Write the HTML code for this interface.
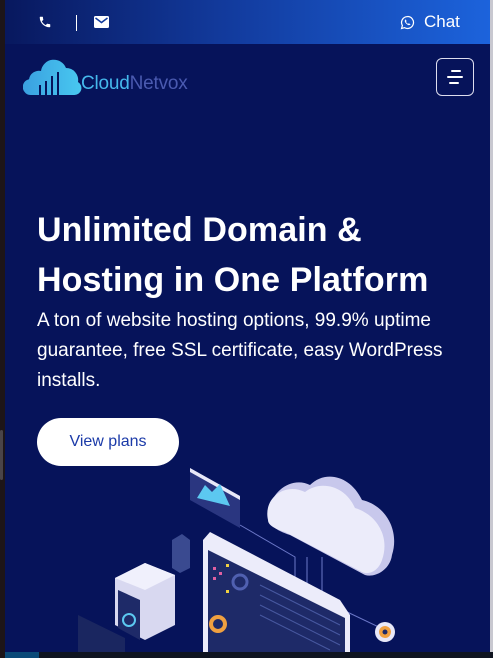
<!DOCTYPE html>
<html><head><meta charset="utf-8"><style>
*{margin:0;padding:0;box-sizing:border-box}
body{width:493px;height:658px;overflow:hidden;background:#06135a;font-family:"Liberation Sans",sans-serif;position:relative}
.lstrip{position:absolute;left:0;top:0;width:5px;height:658px;background:#1d1518}
.rstrip{position:absolute;right:0;top:0;width:3px;height:658px;background:#c8c8d0}
.top{position:absolute;left:5px;top:0;width:485px;height:44px;background:linear-gradient(90deg,#08185e,#123a9c 45%,#1c63dc)}
.bottom{position:absolute;left:5px;top:652px;width:488px;height:6px;background:#0f1420}
.bottom i{position:absolute;left:0;top:0;width:34px;height:6px;background:#0b4a78}
h1{position:absolute;left:37px;top:205px;color:#fff;font-size:34px;line-height:50px;font-weight:bold;width:450px;letter-spacing:0.1px}
p{position:absolute;left:37px;top:306px;color:#fff;font-size:19px;line-height:30px;width:440px}
.btn{position:absolute;left:37px;top:418px;width:142px;height:48px;border-radius:24px;background:#fff;color:#1b3aa8;font-size:16px;text-align:center;line-height:48px}
.menu{position:absolute;left:436px;top:58px;width:38px;height:38px;border:1.5px solid #dde;border-radius:6px}
.menu b{position:absolute;height:2px;background:#fff;border-radius:1px}
</style></head><body>
<div class="top">
<svg style="position:absolute;left:33px;top:15px" width="14" height="14" viewBox="0 0 24 24"><path fill="#fff" d="M6.6 10.8a15 15 0 006.6 6.6l2.2-2.2c.3-.3.7-.4 1-.2 1.1.4 2.3.6 3.6.6.6 0 1 .4 1 1V20c0 .6-.4 1-1 1A17 17 0 013 4c0-.6.4-1 1-1h3.5c.6 0 1 .4 1 1 0 1.3.2 2.5.6 3.6.1.3 0 .7-.2 1z"/></svg>
<div style="position:absolute;left:71px;top:15px;width:1px;height:16px;background:#fff"></div>
<svg style="position:absolute;left:89px;top:16px" width="15" height="12" viewBox="0 0 15 12"><rect width="15" height="12" rx="1.5" fill="#fff"/><path d="M1.5 2l6 4.5 6-4.5" stroke="#123a9c" stroke-width="1.5" fill="none"/></svg>
<svg style="position:absolute;left:395px;top:15px" width="15" height="15" viewBox="0 0 24 24"><path fill="none" stroke="#fff" stroke-width="2" d="M12 2.5a9.5 9.5 0 00-8.2 14.3L2.5 21.5l4.8-1.3A9.5 9.5 0 1012 2.5z"/><path fill="#fff" d="M8.5 7.5c.3-.3.8-.3 1 .1l.9 2c.1.3 0 .6-.2.8l-.5.6c.7 1.4 1.8 2.5 3.2 3.2l.6-.6c.2-.2.5-.3.8-.2l2 .9c.4.2.4.7.1 1-1 1.2-2.5 1.2-4.2.2a10 10 0 01-4-4c-.9-1.7-.8-3.1.3-4z"/></svg>
<div style="position:absolute;left:419px;top:12px;color:#fff;font-size:17px">Chat</div>
</div>
<svg style="position:absolute;left:23px;top:58px" width="60" height="38" viewBox="0 0 60 38"><defs><linearGradient id="g" x1="0" x2="1"><stop offset="0" stop-color="#3aa0e0"/><stop offset="1" stop-color="#48c8f0"/></linearGradient></defs><path fill="url(#g)" d="M8 37a8 8 0 01-2-15.8A10 10 0 0118 13 13 13 0 0143 10a12 12 0 0112 14 7 7 0 01-4 13z"/><g fill="#06135a"><rect x="16" y="27" width="2" height="10"/><rect x="22" y="23" width="2" height="14"/><rect x="28" y="18" width="2" height="19"/><rect x="34" y="14" width="2" height="23"/></g></svg>
<div style="position:absolute;left:81px;top:73px;font-size:19px;letter-spacing:-0.2px"><span style="color:#45b8ec">Cloud</span><span style="color:#4a5ab0">Netvox</span></div>
<div class="menu"><b style="left:14px;top:11px;width:10px"></b><b style="left:10px;top:17px;width:16px"></b><b style="left:12px;top:23px;width:10px"></b></div>
<h1>Unlimited Domain &amp;<br>Hosting in One Platform</h1>
<p>A ton of website hosting options, 99.9% uptime guarantee, free SSL certificate, easy WordPress installs.</p>
<div class="btn">View plans</div>
<svg style="position:absolute;left:0;top:460px" width="493" height="192" viewBox="0 0 493 192">
<path d="M240 65 L295 97 L295 150 M307 97 L307 140 M322 97 L322 140 L385 170" stroke="#6c78c8" stroke-width="1" fill="none"/>
<g><path d="M190 8 L240 36 L240 68 L190 40Z" fill="#2a3680"/><path d="M190 8 L240 36 L240 40 L190 12Z" fill="#e8e8f8"/><path d="M197 38 L205 25 L212 32 L220 24 L230 46Z" fill="#5cc8f0"/></g>
<path d="M270 60 C265 35 290 15 310 25 C325 10 350 15 362 40 C385 45 400 70 392 95 C390 110 375 118 365 115 L290 75 C275 70 270 65 270 60Z" fill="#c8c8ec"/>
<path d="M268 60 C263 38 285 22 305 32 C320 20 345 25 355 48 C378 55 390 78 382 100 C378 112 368 115 362 112 L285 72 C272 68 268 64 268 60Z" fill="#ececfa"/>
<path d="M172 80 L182 74 L190 80 L190 108 L180 113 L172 108Z" fill="#3a4a90"/>
<path d="M203 80 L210 72 L340 140 L350 155 L350 192 L203 192Z" fill="#ececfa"/>
<path d="M208 90 L345 158 L345 192 L208 192Z" fill="#1e2a68"/>
<g fill="#e060a0"><rect x="213" y="107" width="3" height="3"/><rect x="219" y="112" width="3" height="3"/><rect x="213" y="117" width="3" height="3"/></g>
<g fill="#f0d040"><rect x="226" y="104" width="3" height="3"/><rect x="226" y="130" width="3" height="3"/></g>
<circle cx="240" cy="122" r="7" fill="none" stroke="#5060b0" stroke-width="3"/>
<circle cx="218" cy="164" r="7" fill="none" stroke="#f0a040" stroke-width="4"/>
<g stroke="#4858a0" stroke-width="1"><path d="M260 125 L340 165 M260 135 L340 175 M260 145 L340 185 M260 155 L330 190"/></g>
<path d="M115 118 L145 103 L175 115 L175 165 L145 180 L115 165Z" fill="#d8d8f0"/>
<path d="M115 118 L145 103 L175 115 L145 130Z" fill="#f0f0fc"/>
<path d="M118 130 L140 140 L140 180 L118 168Z" fill="#1e2a68"/>
<circle cx="129" cy="160" r="6" fill="none" stroke="#5cc8f0" stroke-width="2"/>
<path d="M78 155 L125 178 L125 192 L78 192Z" fill="#1a2660"/>
<circle cx="385" cy="172" r="10" fill="#e8e8f8"/><circle cx="385" cy="172" r="6" fill="#f0a040"/><circle cx="385" cy="172" r="2.5" fill="#1e2a68"/>
</svg>
<div class="lstrip"></div>
<div style="position:absolute;left:0;top:430px;width:3px;height:50px;background:#4a4448;border-radius:2px"></div>
<div class="rstrip"></div>
<div class="bottom"><i></i></div>
</body></html>
